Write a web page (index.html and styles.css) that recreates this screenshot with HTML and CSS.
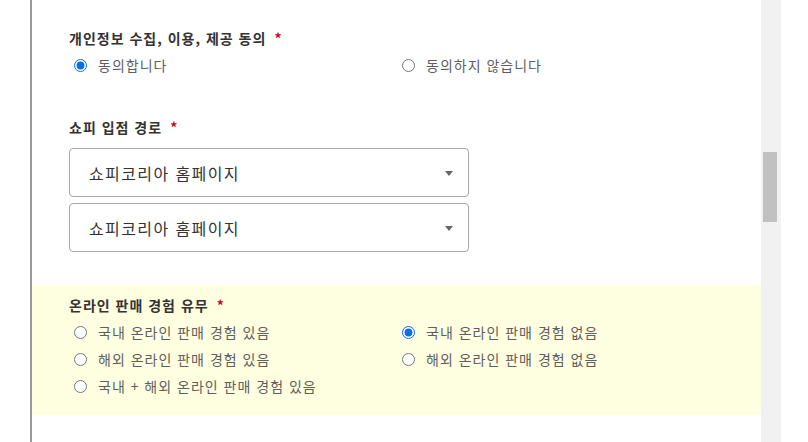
FILE: index.html
```html
<!DOCTYPE html>
<html lang="ko">
<head>
<meta charset="utf-8">
<link rel="stylesheet" href="styles.css">
</head>
<body>
<div class="page">
  <div class="gutter"></div>
  <main class="form">
    <section class="field first">
      <div class="label">개인정보 수집, 이용, 제공 동의<span class="req">*</span></div>
      <div class="options">
        <label class="opt"><input type="radio" name="agree" checked><span>동의합니다</span></label>
        <label class="opt"><input type="radio" name="agree"><span>동의하지 않습니다</span></label>
      </div>
    </section>

    <section class="field second">
      <div class="label">쇼피 입점 경로<span class="req">*</span></div>
      <div class="selects">
        <div class="select"><span>쇼피코리아 홈페이지</span><i class="caret"></i></div>
        <div class="select"><span>쇼피코리아 홈페이지</span><i class="caret"></i></div>
      </div>
    </section>

    <section class="field highlight">
      <div class="label">온라인 판매 경험 유무<span class="req">*</span></div>
      <div class="options">
        <label class="opt"><input type="radio" name="exp"><span>국내 온라인 판매 경험 있음</span></label>
        <label class="opt"><input type="radio" name="exp" checked><span>국내 온라인 판매 경험 없음</span></label>
        <label class="opt"><input type="radio" name="exp"><span>해외 온라인 판매 경험 있음</span></label>
        <label class="opt"><input type="radio" name="exp"><span>해외 온라인 판매 경험 없음</span></label>
        <label class="opt"><input type="radio" name="exp"><span>국내 + 해외 온라인 판매 경험 있음</span></label>
      </div>
    </section>
  </main>
  <div class="scrollbar"><div class="thumb"></div></div>
  <div class="rightpad"></div>
</div>
</body>
</html>
```

FILE: styles.css
```css
* { box-sizing: border-box; }
html, body { margin: 0; padding: 0; background: #fff; }
body {
  font-family: "Noto Sans CJK KR", "Noto Sans", sans-serif;
  width: 808px;
  height: 442px;
  overflow: hidden;
}
.page {
  display: flex;
  height: 442px;
}
.gutter { width: 30px; flex: none; }
.form {
  width: 731px;
  flex: none;
  border-left: 2px solid #9a9a9a;
  padding-top: 28px;
}
.field { padding-left: 37px; }
.label {
  font-size: 14px;
  line-height: 20px;
  font-weight: 700;
  color: #333;
  letter-spacing: 1px;
  margin-bottom: 7px;
}
.req {
  color: #d0021b;
  margin-left: 8px;
  font-weight: 700;
}
.options {
  display: grid;
  grid-template-columns: 328px 1fr;
  row-gap: 7px;
}
.opt {
  display: flex;
  align-items: center;
  height: 20px;
  font-size: 14px;
  letter-spacing: 1px;
  color: #5e5e5e;
}
.opt input {
  margin: 0 11px 0 5px;
  width: 13px;
  height: 13px;
  accent-color: #0b6ee8;
}
.second { margin-top: 42px; }
.second .label { margin-bottom: 11px; }
.selects {
  display: flex;
  flex-direction: column;
  gap: 6px;
  width: 400px;
}
.select {
  height: 49px;
  border: 1px solid #a8a8a8;
  border-radius: 4px;
  display: flex;
  align-items: center;
  justify-content: space-between;
  padding: 0 15px 0 19px;
  font-size: 16px;
  letter-spacing: 1.4px;
  color: #333;
}
.caret {
  width: 0;
  height: 0;
  border-left: 4px solid transparent;
  border-right: 4px solid transparent;
  border-top: 5px solid #666;
  margin-top: 2px;
}
.highlight {
  margin-top: 33px;
  background: #fefee0;
  padding-top: 10px;
  padding-bottom: 19px;
}
.scrollbar {
  width: 20px;
  flex: none;
  background: #f1f1f1;
  padding-top: 152px;
  padding-left: 2px;
}
.thumb {
  width: 14px;
  height: 70px;
  background: #c1c1c1;
}
.rightpad { flex: 1; }
```
